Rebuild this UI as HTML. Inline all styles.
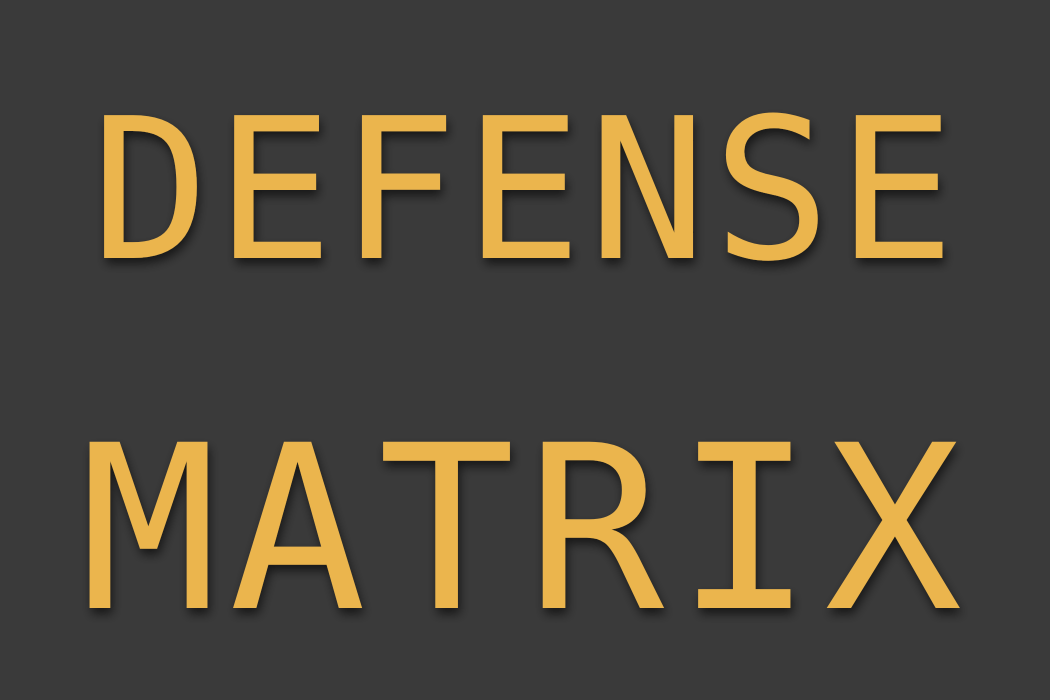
<!DOCTYPE html>
<html><head><style>
html,body{margin:0;padding:0;width:1050px;height:700px;overflow:hidden;background:#3a3a3a;}
svg{display:block}
text{font-family:"DejaVu Sans Mono","Liberation Mono",monospace;fill:#ebb54e;}
</style></head><body>
<svg width="1050" height="700" viewBox="0 0 1050 700">
<defs><filter id="s" x="-10%" y="-20%" width="120%" height="150%"><feDropShadow dx="2" dy="6" stdDeviation="5" flood-color="#000" flood-opacity="0.6"/></filter></defs>
<rect width="1050" height="700" fill="#3a3a3a"/>
<g filter="url(#s)">
<text x="91" y="258" font-size="196" textLength="864" lengthAdjust="spacing">DEFENSE</text>
<text x="80" y="608" font-size="228" textLength="882" lengthAdjust="spacing">MATRIX</text>
</g>
</svg>
</body></html>
